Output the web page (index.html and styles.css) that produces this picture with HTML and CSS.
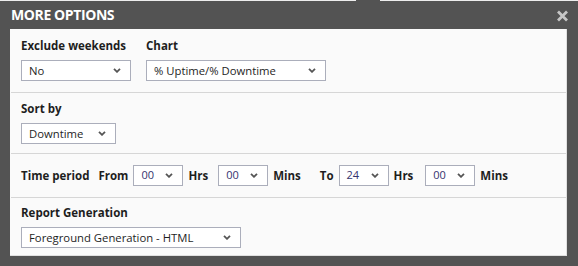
FILE: index.html
```html
<!DOCTYPE html>
<html>
<head>
<meta charset="utf-8">
<link rel="stylesheet" href="styles.css">
</head>
<body>
<div class="dialog">
  <div class="topline"><span class="tab"></span></div>
  <div class="header">
    <span class="title">MORE OPTIONS</span>
    <svg class="close" viewBox="0 0 13 12" width="13" height="12"><path d="M2 1.5 L11 10.5 M11 1.5 L2 10.5" stroke="#c6c6c6" stroke-width="2.8" stroke-linecap="butt"/></svg>
  </div>
  <div class="panel">
    <div class="row row1">
      <div class="field">
        <div class="label">Exclude weekends</div>
        <div class="select w110"><span>No</span><svg class="chev" viewBox="0 0 8 5" width="8" height="5"><path d="M1 0.8 L4 3.8 L7 0.8" fill="none" stroke="#555" stroke-width="1.8"/></svg></div>
      </div>
      <div class="field">
        <div class="label">Chart</div>
        <div class="select w180"><span>% Uptime/% Downtime</span><svg class="chev" viewBox="0 0 8 5" width="8" height="5"><path d="M1 0.8 L4 3.8 L7 0.8" fill="none" stroke="#555" stroke-width="1.8"/></svg></div>
      </div>
    </div>
    <div class="row row2">
      <div class="field">
        <div class="label">Sort by</div>
        <div class="select w95"><span>Downtime</span><svg class="chev" viewBox="0 0 8 5" width="8" height="5"><path d="M1 0.8 L4 3.8 L7 0.8" fill="none" stroke="#555" stroke-width="1.8"/></svg></div>
      </div>
    </div>
    <div class="row row3">
      <span class="label tp">Time period</span>
      <span class="label">From</span>
      <div class="select w50"><span class="num">00</span><svg class="chev" viewBox="0 0 8 5" width="8" height="5"><path d="M1 0.8 L4 3.8 L7 0.8" fill="none" stroke="#555" stroke-width="1.8"/></svg></div>
      <span class="label unit hrs">Hrs</span>
      <div class="select w50"><span class="num">00</span><svg class="chev" viewBox="0 0 8 5" width="8" height="5"><path d="M1 0.8 L4 3.8 L7 0.8" fill="none" stroke="#555" stroke-width="1.8"/></svg></div>
      <span class="label unit mins">Mins</span>
      <span class="label">To</span>
      <div class="select w50"><span class="num">24</span><svg class="chev" viewBox="0 0 8 5" width="8" height="5"><path d="M1 0.8 L4 3.8 L7 0.8" fill="none" stroke="#555" stroke-width="1.8"/></svg></div>
      <span class="label unit hrs2">Hrs</span>
      <div class="select w50"><span class="num">00</span><svg class="chev" viewBox="0 0 8 5" width="8" height="5"><path d="M1 0.8 L4 3.8 L7 0.8" fill="none" stroke="#555" stroke-width="1.8"/></svg></div>
      <span class="label unit">Mins</span>
    </div>
    <div class="row row4">
      <div class="field">
        <div class="label">Report Generation</div>
        <div class="select w220"><span>Foreground Generation - HTML</span><svg class="chev" viewBox="0 0 8 5" width="8" height="5"><path d="M1 0.8 L4 3.8 L7 0.8" fill="none" stroke="#555" stroke-width="1.8"/></svg></div>
      </div>
    </div>
  </div>
</div>
</body>
</html>
```
FILE: styles.css
```css
html, body {
  margin: 0;
  padding: 0;
  background: #535353;
}
body {
  width: 578px;
  height: 266px;
  overflow: hidden;
  font-family: "Open Sans", "DejaVu Sans", sans-serif;
}
.dialog {
  width: 578px;
  height: 266px;
  background: #535353;
}
.topline {
  height: 1px;
  background: #ededed;
  position: relative;
}
.topline .tab {
  position: absolute;
  left: 356px;
  width: 24px;
  top: 0;
  height: 1px;
  background: #535353;
}
.header {
  height: 28px;
  display: flex;
  align-items: center;
  justify-content: space-between;
  padding: 0 9px 0 11px;
}
.title {
  color: #fff;
  font-weight: 700;
  font-size: 14px;
  letter-spacing: -0.4px;
  margin-top: -2px;
}
.close {
  display: block;
  margin-top: 2px;
}
.panel {
  margin: 0 11px 0 10px;
  background: #fafafa;
  height: 227px;
  border-right: 1px solid #e0e0e0;
  border-bottom: 1px solid #e0e0e0;
  box-sizing: border-box;
  display: flex;
  flex-direction: column;
}
.row {
  border-bottom: 1px solid #d6d6d6;
  padding-left: 10px;
  display: flex;
  margin-left: 1px;
  box-sizing: border-box;
}
.row4 { border-bottom: none; }
.row1 { height: 64px; padding-top: 9px; gap: 15px; }
.row2 { height: 61px; padding-top: 8px; }
.row3 { height: 44px; padding-top: 11px; align-items: flex-start; gap: 5px; }
.row4 { flex: 1; padding-top: 7px; }
.field { display: flex; flex-direction: column; gap: 6px; }
.label {
  font-size: 11.5px;
  font-weight: 700;
  color: #1e1e1e;
  line-height: 16px;
  white-space: nowrap;
}
.row3 .label { line-height: 21px; }
.row3 .tp { margin-right: 4px; }
.row3 .hrs { margin-right: 5px; }
.row3 .hrs2 { margin-right: 7px; }
.row3 .mins { margin-right: 14px; }
.select {
  height: 21px;
  box-sizing: border-box;
  border: 1px solid #abaebb;
  background: #fff;
  display: flex;
  align-items: center;
  justify-content: space-between;
  padding: 0 9px 0 7px;
  font-size: 11.3px;
  color: #1e1e1e;
}
.select span { line-height: 19px; white-space: nowrap; }
.select .num { color: #35336e; font-size: 11px; margin-top: -3px; }
.chev { display: block; }
.w110 { width: 110px; }
.w180 { width: 180px; }
.w95 { width: 95px; }
.w50 { width: 50px; }
.w220 { width: 220px; }
```
